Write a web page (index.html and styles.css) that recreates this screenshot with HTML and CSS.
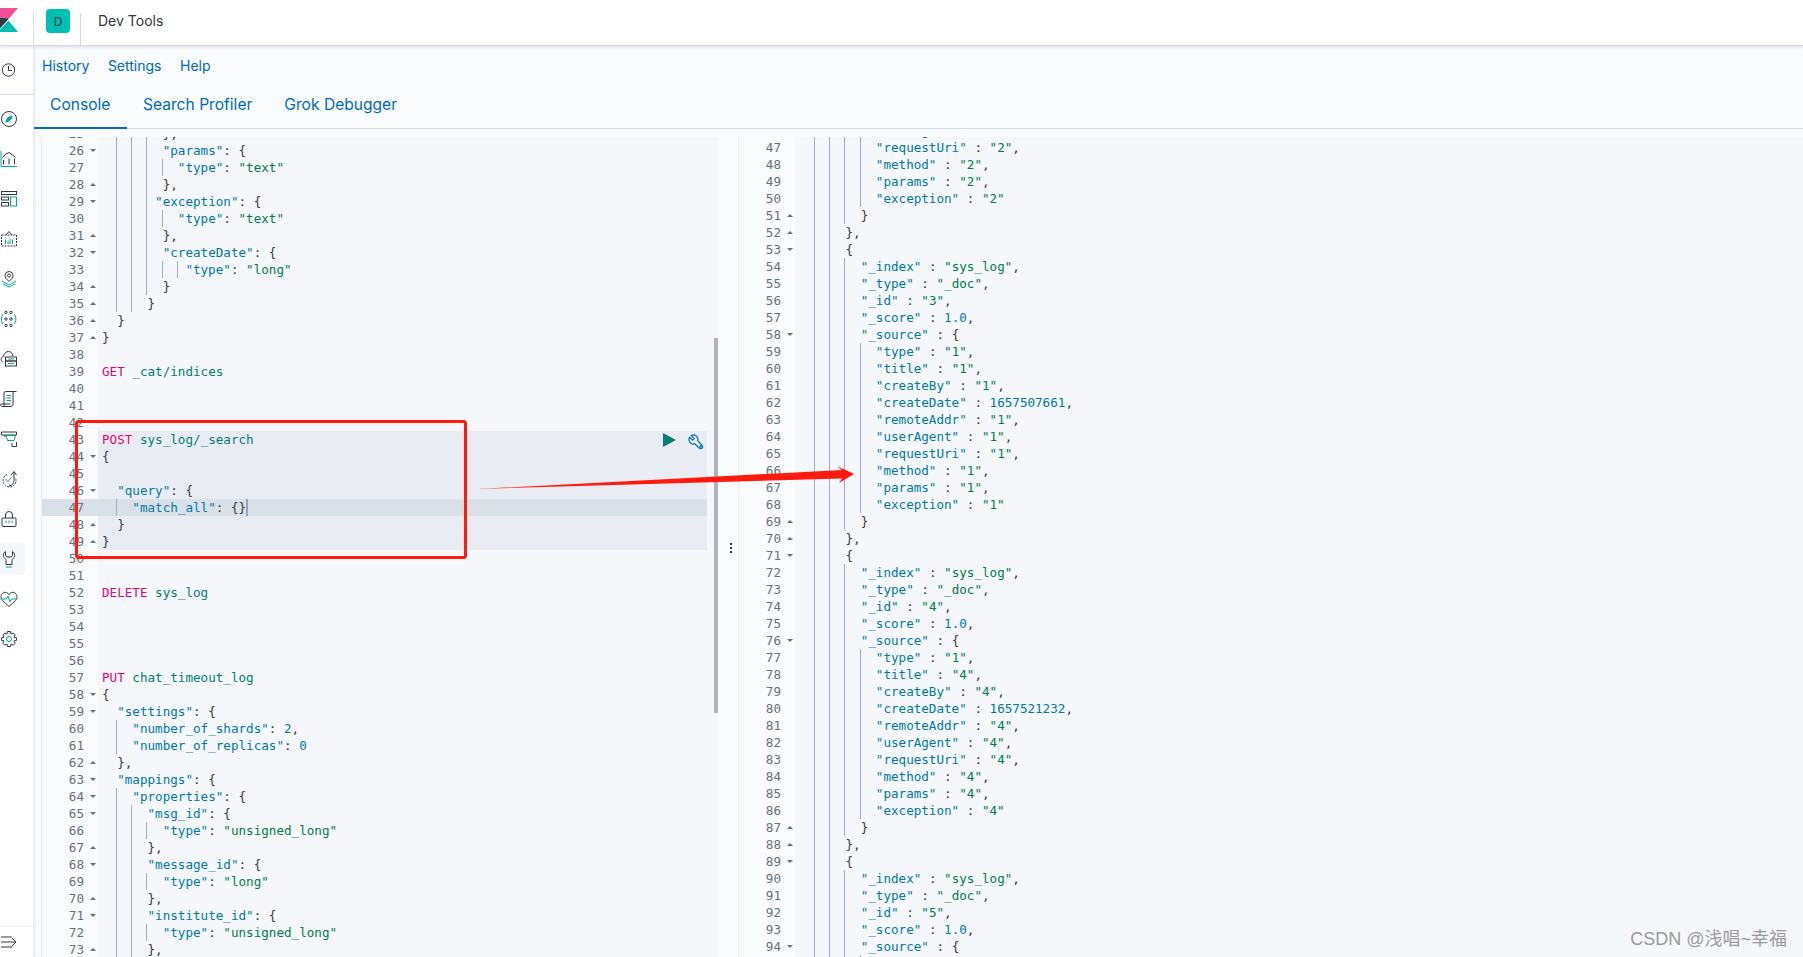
FILE: index.html
```html
<!DOCTYPE html>
<html lang="en">
<head>
<meta charset="utf-8">
<title>Dev Tools</title>
<link rel="stylesheet" href="styles.css">
</head>
<body>
<header class="top">
  <div class="logo-cell">
    <svg class="logo" viewBox="0 0 18 24" width="18" height="24"><path fill="#f04e98" d="M0 0H18L9 10.500 0 9.500Z"/><path fill="#343741" d="M0 9.500 9 10.500 0 20.500Z"/><path fill="#00bfb3" d="M0 24V21.500L8.500 12.500 18 24Z"/></svg>
  </div>
  <div class="space-cell"><span class="badge">D</span></div>
  <div class="crumb">Dev Tools</div>
</header>
<div class="shell">
  <nav class="side">
    <div class="recent">
      <svg class="ico" viewBox="0 0 18 18"><circle cx="8.500" cy="9" r="6.200"/><path d="M8.500 5V9.500H12"/></svg>
    </div>
    <ul class="apps">
      <li><span class="pill"><svg class="ico" viewBox="0 0 18 18"><circle cx="9" cy="9" r="7.500"/><path class="fill" d="M12.500 5.500C8 6 6 8 5.500 12.500 10 12 12 10 12.500 5.500Z"/></svg></span></li>
      <li><span class="pill"><svg class="ico" viewBox="0 0 18 18"><path class="t" d="M1 1V16.500H17"/><path d="M3.500 14.500V10M9 14.500V8.500M14.500 14.500V8.500M2.500 7.500 6 4 9 2.500 12.500 5 15.500 7.500"/></svg></span></li>
      <li><span class="pill"><svg class="ico" viewBox="0 0 18 18"><rect x="1.500" y="1.500" width="15" height="3"/><rect x="1.500" y="7" width="7" height="3"/><rect x="1.500" y="12.500" width="7" height="3.500"/><rect class="t" x="10.500" y="7" width="6" height="9"/></svg></span></li>
      <li><span class="pill"><svg class="ico" viewBox="0 0 18 18"><rect class="dash" x="1.500" y="5" width="15" height="11"/><path d="M6 5 9 1.500 12 5"/><path class="t" d="M5.500 9.500V14M8 11V14M10 8.500V14M12.500 9.500V14" /></svg></span></li>
      <li><span class="pill"><svg class="ico" viewBox="0 0 18 18"><path d="M9 11.500C6.500 9 5 7.500 5 5.500A4 4 0 0 1 13 5.500C13 7.500 11.500 9 9 11.500Z"/><circle cx="9" cy="5.500" r="1.500"/><path class="t" d="M2 11 9 15 16 11M3 14 9 17 15 14"/></svg></span></li>
      <li><span class="pill"><svg class="ico" viewBox="0 0 18 18"><g class="dots"><circle cx="6" cy="2.500" r="1.200"/><circle cx="11" cy="2.500" r="1.200"/><circle cx="6" cy="9" r="1.200"/><circle cx="11" cy="9" r="1.200"/><circle cx="6" cy="15.500" r="1.200"/><circle cx="11" cy="15.500" r="1.200"/></g><path class="t" d="M3 4C1 6 1 12 3 14M14 4C16.500 6 16.500 12 14 14"/></svg></span></li>
      <li><span class="pill"><svg class="ico" viewBox="0 0 18 18"><path d="M3 12C0.500 11 0.500 7 3.500 6.500 4 3 6.500 1.500 8.500 1.500 11 1.500 12.500 3.500 13 6"/><rect x="5.500" y="7" width="11" height="4"/><rect x="5.500" y="11" width="11" height="5"/><path class="t" d="M8 9H14M8 13.500H14"/></svg></span></li>
      <li><span class="pill"><svg class="ico" viewBox="0 0 18 18"><path d="M4 16.500V3A1.500 1.500 0 0 1 5.500 1.500H16.500M13 1.500V13.500A2.500 2.500 0 0 1 11 16.500H2A1.500 1.500 0 0 1 1 14H10.500"/><path class="t" d="M6.500 5.500H11M6.500 8H11M6.500 10.500H11"/></svg></span></li>
      <li><span class="pill"><svg class="ico" viewBox="0 0 18 18"><path d="M1.500 2H16.500V5H1.500ZM5 5V7M12 13V16.500H16.500V12"/><path class="t" d="M6 5.500H15.500L14 10.500H7.500Z"/></svg></span></li>
      <li><span class="pill"><svg class="ico" viewBox="0 0 18 18"><path class="dash" d="M7 4.500A6.500 6.500 0 1 0 15.500 8"/><path d="M11 5 14 1.500 16.500 5M14 2V10.500A6 6 0 0 1 9 16"/><path class="t" d="M5.500 9 8 11.500 11.500 7.500"/></svg></span></li>
      <li><span class="pill"><svg class="ico" viewBox="0 0 18 18"><rect x="2" y="8" width="14" height="8.500" rx="1"/><path d="M5.500 8V5A3.500 3.500 0 0 1 12.500 5V8"/><path class="t" d="M6 10.500V13M9 10.500V13M12 10.500V13"/></svg></span></li>
      <li><span class="pill on"><svg class="ico" viewBox="0 0 18 18"><path d="M5.500 1.500C3 3 2.500 6.500 5 8.500 6 9.500 6 10.500 6 14.500H12C12 10.500 12 9.500 13 8.500 15.500 6.500 15 3 12.500 1.500V5.500L11 7H7L5.500 5.500Z"/><path class="t" d="M6 17H12"/></svg></span></li>
      <li><span class="pill"><svg class="ico" viewBox="0 0 18 18"><path d="M2.500 10.500C0.500 8 0.500 4.500 3 3 5.500 1.500 8 2.500 9 5 10 2.500 12.500 1.500 15 3 17.500 4.500 17.500 8 15.500 10.500L9 16.500Z"/><path class="t" d="M0.500 9H6.500L8 6 10 12 11.500 9H17.500"/></svg></span></li>
      <li><span class="pill"><svg class="ico" viewBox="0 0 18 18"><path d="M7.500 1.500H10.500L11 4 13.200 3 15.200 5 14 7.300 16.500 7.800V10.400L14 10.900 15.200 13.200 13.200 15.200 11 14 10.500 16.500H7.500L7 14 4.800 15.200 2.800 13.200 4 10.900 1.500 10.400V7.800L4 7.300 2.800 5 4.800 3 7 4Z"/><circle class="t" cx="9" cy="9" r="2.500"/></svg></span></li>
    </ul>
    <div class="collapse">
      <svg class="ico" viewBox="0 0 18 18"><path d="M1 4H12M1 9H16M1 14H12M12 5 16 9 12 13"/></svg>
    </div>
  </nav>
  <main class="main">
    <div class="subnav"><a>History</a><a>Settings</a><a>Help</a></div>
    <div class="tabs"><a class="tab sel-tab">Console</a><a class="tab">Search Profiler</a><a class="tab">Grok Debugger</a></div>
    <div class="panes">
      <section class="editor left">
<div class="r"><span class="n">25<i class="fu"></i></span><span class="c"><b></b><b></b><b></b>  },</span></div>
<div class="r"><span class="n">26<i class="fd"></i></span><span class="c"><b></b><b></b><b></b>  <span class="k">"params"</span>: {</span></div>
<div class="r"><span class="n">27<i></i></span><span class="c"><b></b><b></b><b></b><b></b>  <span class="k">"type"</span>: <span class="s">"text"</span></span></div>
<div class="r"><span class="n">28<i class="fu"></i></span><span class="c"><b></b><b></b><b></b>  },</span></div>
<div class="r"><span class="n">29<i class="fd"></i></span><span class="c"><b></b><b></b><b></b> <span class="k">"exception"</span>: {</span></div>
<div class="r"><span class="n">30<i></i></span><span class="c"><b></b><b></b><b></b><b></b>  <span class="k">"type"</span>: <span class="s">"text"</span></span></div>
<div class="r"><span class="n">31<i class="fu"></i></span><span class="c"><b></b><b></b><b></b>  },</span></div>
<div class="r"><span class="n">32<i class="fd"></i></span><span class="c"><b></b><b></b><b></b>  <span class="k">"createDate"</span>: {</span></div>
<div class="r"><span class="n">33<i></i></span><span class="c"><b></b><b></b><b></b><b></b><b></b> <span class="k">"type"</span>: <span class="s">"long"</span></span></div>
<div class="r"><span class="n">34<i class="fu"></i></span><span class="c"><b></b><b></b><b></b>  }</span></div>
<div class="r"><span class="n">35<i class="fu"></i></span><span class="c"><b></b><b></b>  }</span></div>
<div class="r"><span class="n">36<i class="fu"></i></span><span class="c">  }</span></div>
<div class="r"><span class="n">37<i class="fu"></i></span><span class="c">}</span></div>
<div class="r"><span class="n">38<i></i></span><span class="c"></span></div>
<div class="r"><span class="n">39<i></i></span><span class="c"><span class="m">GET</span> <span class="u">_cat/indices</span></span></div>
<div class="r"><span class="n">40<i></i></span><span class="c"></span></div>
<div class="r"><span class="n">41<i></i></span><span class="c"></span></div>
<div class="r"><span class="n">42<i></i></span><span class="c"></span></div>
<div class="r sel"><span class="n">43<i></i></span><span class="c"><span class="m">POST</span> <span class="u">sys_log/_search</span></span></div>
<div class="r sel"><span class="n">44<i class="fd"></i></span><span class="c">{</span></div>
<div class="r sel"><span class="n">45<i></i></span><span class="c"></span></div>
<div class="r sel"><span class="n">46<i class="fd"></i></span><span class="c">  <span class="k">"query"</span>: {</span></div>
<div class="r act"><span class="n">47<i></i></span><span class="c"><b></b>  <span class="k">"match_all"</span>: {}<em class="cur"></em></span></div>
<div class="r sel"><span class="n">48<i class="fu"></i></span><span class="c">  }</span></div>
<div class="r sel"><span class="n">49<i class="fu"></i></span><span class="c">}</span></div>
<div class="r"><span class="n">50<i></i></span><span class="c"></span></div>
<div class="r"><span class="n">51<i></i></span><span class="c"></span></div>
<div class="r"><span class="n">52<i></i></span><span class="c"><span class="m">DELETE</span> <span class="u">sys_log</span></span></div>
<div class="r"><span class="n">53<i></i></span><span class="c"></span></div>
<div class="r"><span class="n">54<i></i></span><span class="c"></span></div>
<div class="r"><span class="n">55<i></i></span><span class="c"></span></div>
<div class="r"><span class="n">56<i></i></span><span class="c"></span></div>
<div class="r"><span class="n">57<i></i></span><span class="c"><span class="m">PUT</span> <span class="u">chat_timeout_log</span></span></div>
<div class="r"><span class="n">58<i class="fd"></i></span><span class="c">{</span></div>
<div class="r"><span class="n">59<i class="fd"></i></span><span class="c">  <span class="k">"settings"</span>: {</span></div>
<div class="r"><span class="n">60<i></i></span><span class="c"><b></b>  <span class="k">"number_of_shards"</span>: <span class="v">2</span>,</span></div>
<div class="r"><span class="n">61<i></i></span><span class="c"><b></b>  <span class="k">"number_of_replicas"</span>: <span class="v">0</span></span></div>
<div class="r"><span class="n">62<i class="fu"></i></span><span class="c">  },</span></div>
<div class="r"><span class="n">63<i class="fd"></i></span><span class="c">  <span class="k">"mappings"</span>: {</span></div>
<div class="r"><span class="n">64<i class="fd"></i></span><span class="c"><b></b>  <span class="k">"properties"</span>: {</span></div>
<div class="r"><span class="n">65<i class="fd"></i></span><span class="c"><b></b><b></b>  <span class="k">"msg_id"</span>: {</span></div>
<div class="r"><span class="n">66<i></i></span><span class="c"><b></b><b></b><b></b>  <span class="k">"type"</span>: <span class="s">"unsigned_long"</span></span></div>
<div class="r"><span class="n">67<i class="fu"></i></span><span class="c"><b></b><b></b>  },</span></div>
<div class="r"><span class="n">68<i class="fd"></i></span><span class="c"><b></b><b></b>  <span class="k">"message_id"</span>: {</span></div>
<div class="r"><span class="n">69<i></i></span><span class="c"><b></b><b></b><b></b>  <span class="k">"type"</span>: <span class="s">"long"</span></span></div>
<div class="r"><span class="n">70<i class="fu"></i></span><span class="c"><b></b><b></b>  },</span></div>
<div class="r"><span class="n">71<i class="fd"></i></span><span class="c"><b></b><b></b>  <span class="k">"institute_id"</span>: {</span></div>
<div class="r"><span class="n">72<i></i></span><span class="c"><b></b><b></b><b></b>  <span class="k">"type"</span>: <span class="s">"unsigned_long"</span></span></div>
<div class="r"><span class="n">73<i class="fu"></i></span><span class="c"><b></b><b></b>  },</span></div>
        <div class="actions">
          <svg class="play" viewBox="0 0 13 14" width="13" height="14"><path d="M0 0 13 7 0 14Z"/></svg>
          <svg class="wrench" viewBox="0 0 16 17" width="16" height="17"><path d="M1.600 3.250 4.500 6.200 6.200 4.500 3.250 1.600A4.500 4.500 0 0 1 9.800 6.800L13.800 11A2 2 0 1 1 11 13.800L6.800 9.800A4.500 4.500 0 0 1 1.600 3.250Z"/><circle cx="12.500" cy="12.500" r="0.600"/></svg>
        </div>
        <div class="thumb"></div>
      </section>
      <div class="resizer"><span></span><span></span><span></span></div>
      <section class="editor right">
<div class="r"><span class="n">46<i></i></span><span class="c"><b></b><b></b><b></b><b></b>  <span class="k">"userAgent"</span> : <span class="s">"2"</span>,</span></div>
<div class="r"><span class="n">47<i></i></span><span class="c"><b></b><b></b><b></b><b></b>  <span class="k">"requestUri"</span> : <span class="s">"2"</span>,</span></div>
<div class="r"><span class="n">48<i></i></span><span class="c"><b></b><b></b><b></b><b></b>  <span class="k">"method"</span> : <span class="s">"2"</span>,</span></div>
<div class="r"><span class="n">49<i></i></span><span class="c"><b></b><b></b><b></b><b></b>  <span class="k">"params"</span> : <span class="s">"2"</span>,</span></div>
<div class="r"><span class="n">50<i></i></span><span class="c"><b></b><b></b><b></b><b></b>  <span class="k">"exception"</span> : <span class="s">"2"</span></span></div>
<div class="r"><span class="n">51<i class="fu"></i></span><span class="c"><b></b><b></b><b></b>  }</span></div>
<div class="r"><span class="n">52<i class="fu"></i></span><span class="c"><b></b><b></b>  },</span></div>
<div class="r"><span class="n">53<i class="fd"></i></span><span class="c"><b></b><b></b>  {</span></div>
<div class="r"><span class="n">54<i></i></span><span class="c"><b></b><b></b><b></b>  <span class="k">"_index"</span> : <span class="s">"sys_log"</span>,</span></div>
<div class="r"><span class="n">55<i></i></span><span class="c"><b></b><b></b><b></b>  <span class="k">"_type"</span> : <span class="s">"_doc"</span>,</span></div>
<div class="r"><span class="n">56<i></i></span><span class="c"><b></b><b></b><b></b>  <span class="k">"_id"</span> : <span class="s">"3"</span>,</span></div>
<div class="r"><span class="n">57<i></i></span><span class="c"><b></b><b></b><b></b>  <span class="k">"_score"</span> : <span class="v">1.0</span>,</span></div>
<div class="r"><span class="n">58<i class="fd"></i></span><span class="c"><b></b><b></b><b></b>  <span class="k">"_source"</span> : {</span></div>
<div class="r"><span class="n">59<i></i></span><span class="c"><b></b><b></b><b></b><b></b>  <span class="k">"type"</span> : <span class="s">"1"</span>,</span></div>
<div class="r"><span class="n">60<i></i></span><span class="c"><b></b><b></b><b></b><b></b>  <span class="k">"title"</span> : <span class="s">"1"</span>,</span></div>
<div class="r"><span class="n">61<i></i></span><span class="c"><b></b><b></b><b></b><b></b>  <span class="k">"createBy"</span> : <span class="s">"1"</span>,</span></div>
<div class="r"><span class="n">62<i></i></span><span class="c"><b></b><b></b><b></b><b></b>  <span class="k">"createDate"</span> : <span class="v">1657507661</span>,</span></div>
<div class="r"><span class="n">63<i></i></span><span class="c"><b></b><b></b><b></b><b></b>  <span class="k">"remoteAddr"</span> : <span class="s">"1"</span>,</span></div>
<div class="r"><span class="n">64<i></i></span><span class="c"><b></b><b></b><b></b><b></b>  <span class="k">"userAgent"</span> : <span class="s">"1"</span>,</span></div>
<div class="r"><span class="n">65<i></i></span><span class="c"><b></b><b></b><b></b><b></b>  <span class="k">"requestUri"</span> : <span class="s">"1"</span>,</span></div>
<div class="r"><span class="n">66<i></i></span><span class="c"><b></b><b></b><b></b><b></b>  <span class="k">"method"</span> : <span class="s">"1"</span>,</span></div>
<div class="r"><span class="n">67<i></i></span><span class="c"><b></b><b></b><b></b><b></b>  <span class="k">"params"</span> : <span class="s">"1"</span>,</span></div>
<div class="r"><span class="n">68<i></i></span><span class="c"><b></b><b></b><b></b><b></b>  <span class="k">"exception"</span> : <span class="s">"1"</span></span></div>
<div class="r"><span class="n">69<i class="fu"></i></span><span class="c"><b></b><b></b><b></b>  }</span></div>
<div class="r"><span class="n">70<i class="fu"></i></span><span class="c"><b></b><b></b>  },</span></div>
<div class="r"><span class="n">71<i class="fd"></i></span><span class="c"><b></b><b></b>  {</span></div>
<div class="r"><span class="n">72<i></i></span><span class="c"><b></b><b></b><b></b>  <span class="k">"_index"</span> : <span class="s">"sys_log"</span>,</span></div>
<div class="r"><span class="n">73<i></i></span><span class="c"><b></b><b></b><b></b>  <span class="k">"_type"</span> : <span class="s">"_doc"</span>,</span></div>
<div class="r"><span class="n">74<i></i></span><span class="c"><b></b><b></b><b></b>  <span class="k">"_id"</span> : <span class="s">"4"</span>,</span></div>
<div class="r"><span class="n">75<i></i></span><span class="c"><b></b><b></b><b></b>  <span class="k">"_score"</span> : <span class="v">1.0</span>,</span></div>
<div class="r"><span class="n">76<i class="fd"></i></span><span class="c"><b></b><b></b><b></b>  <span class="k">"_source"</span> : {</span></div>
<div class="r"><span class="n">77<i></i></span><span class="c"><b></b><b></b><b></b><b></b>  <span class="k">"type"</span> : <span class="s">"1"</span>,</span></div>
<div class="r"><span class="n">78<i></i></span><span class="c"><b></b><b></b><b></b><b></b>  <span class="k">"title"</span> : <span class="s">"4"</span>,</span></div>
<div class="r"><span class="n">79<i></i></span><span class="c"><b></b><b></b><b></b><b></b>  <span class="k">"createBy"</span> : <span class="s">"4"</span>,</span></div>
<div class="r"><span class="n">80<i></i></span><span class="c"><b></b><b></b><b></b><b></b>  <span class="k">"createDate"</span> : <span class="v">1657521232</span>,</span></div>
<div class="r"><span class="n">81<i></i></span><span class="c"><b></b><b></b><b></b><b></b>  <span class="k">"remoteAddr"</span> : <span class="s">"4"</span>,</span></div>
<div class="r"><span class="n">82<i></i></span><span class="c"><b></b><b></b><b></b><b></b>  <span class="k">"userAgent"</span> : <span class="s">"4"</span>,</span></div>
<div class="r"><span class="n">83<i></i></span><span class="c"><b></b><b></b><b></b><b></b>  <span class="k">"requestUri"</span> : <span class="s">"4"</span>,</span></div>
<div class="r"><span class="n">84<i></i></span><span class="c"><b></b><b></b><b></b><b></b>  <span class="k">"method"</span> : <span class="s">"4"</span>,</span></div>
<div class="r"><span class="n">85<i></i></span><span class="c"><b></b><b></b><b></b><b></b>  <span class="k">"params"</span> : <span class="s">"4"</span>,</span></div>
<div class="r"><span class="n">86<i></i></span><span class="c"><b></b><b></b><b></b><b></b>  <span class="k">"exception"</span> : <span class="s">"4"</span></span></div>
<div class="r"><span class="n">87<i class="fu"></i></span><span class="c"><b></b><b></b><b></b>  }</span></div>
<div class="r"><span class="n">88<i class="fu"></i></span><span class="c"><b></b><b></b>  },</span></div>
<div class="r"><span class="n">89<i class="fd"></i></span><span class="c"><b></b><b></b>  {</span></div>
<div class="r"><span class="n">90<i></i></span><span class="c"><b></b><b></b><b></b>  <span class="k">"_index"</span> : <span class="s">"sys_log"</span>,</span></div>
<div class="r"><span class="n">91<i></i></span><span class="c"><b></b><b></b><b></b>  <span class="k">"_type"</span> : <span class="s">"_doc"</span>,</span></div>
<div class="r"><span class="n">92<i></i></span><span class="c"><b></b><b></b><b></b>  <span class="k">"_id"</span> : <span class="s">"5"</span>,</span></div>
<div class="r"><span class="n">93<i></i></span><span class="c"><b></b><b></b><b></b>  <span class="k">"_score"</span> : <span class="v">1.0</span>,</span></div>
<div class="r"><span class="n">94<i class="fd"></i></span><span class="c"><b></b><b></b><b></b>  <span class="k">"_source"</span> : {</span></div>
<div class="r"><span class="n">95<i></i></span><span class="c"><b></b><b></b><b></b><b></b>  <span class="k">"type"</span> : <span class="s">"1"</span>,</span></div>
      </section>
    </div>
  </main>
</div>
<svg class="marks" viewBox="0 0 1803 957" width="1803" height="957">
  <rect class="box" x="76.500" y="421.500" width="389" height="136" rx="2"/>
  <path class="arrow" d="M477 489 842 470 837 466 854 474 839 483 842 478.500Z"/>
</svg>
<div class="watermark">CSDN @浅唱~幸福</div>
</body>
</html>
```
FILE: styles.css
```css
* { box-sizing: border-box; }
html, body { margin: 0; height: 100%; overflow: hidden; }
body { font-family: Inter, "Noto Sans", sans-serif; color: #343741; background: #fafbfd; display: flex; flex-direction: column; position: relative; }

.top { height: 46px; flex: none; display: flex; background: #fff; border-bottom: 1px solid #d3dae6; box-shadow: 0 1px 3px rgba(152,162,179,.35); position: relative; z-index: 2; }
.logo-cell { width: 33px; padding-top: 8px; }
.logo { display: block; }
.space-cell { width: 48px; margin-top: 13px; border-left: 1px solid #d3dae6; border-right: 1px solid #d3dae6; padding: 0 0 0 12px; }
.badge { display: flex; align-items: center; justify-content: center; width: 24px; height: 24px; margin-top: -4px; border-radius: 4px; background: #00bfb3; color: #1a3a3a; font-size: 12px; }
.crumb { margin-left: 17px; padding-top: 12px; font-size: 14px; line-height: 18px; color: #343741; }

.shell { flex: 1; display: flex; min-height: 0; }
.side { width: 34px; flex: none; background: #fff; display: flex; flex-direction: column; border-right: 1px solid #e6e9f0; box-shadow: 1px 0 2px rgba(152,162,179,.18); position: relative; z-index: 1; }
.recent { height: 49px; display: flex; align-items: center; border-bottom: 1px solid #d3dae6; }
.apps { list-style: none; margin: 0; padding: 4px 0 0; flex: 1; }
.apps li { height: 40px; display: flex; align-items: center; }
.pill { width: 25px; height: 32px; display: flex; align-items: center; border-radius: 0 4px 4px 0; }
.pill.on { background: #f5f7fa; }
.collapse { height: 31px; display: flex; align-items: center; border-top: 1px solid #eef0f5; }
.ico { width: 18px; height: 18px; display: block; fill: none; stroke: #343741; stroke-width: 1; }
.ico .t { stroke: #00a69b; }
.ico .fill { fill: #00a69b; stroke: none; }
.ico .dash { stroke-dasharray: 2 1; }
.ico .dots { fill: none; }

.main { flex: 1; min-width: 0; display: flex; flex-direction: column; }
.subnav { height: 38px; flex: none; display: flex; align-items: center; gap: 18.500px; padding-left: 8px; margin-bottom: 1px; font-size: 14px; color: #006bb4; }
.tabs { height: 44px; flex: none; display: flex; border-bottom: 1px solid #d3dae6; margin-bottom: 8px; }
.tab { height: 44px; padding: 0 16px; font-size: 15.600px; line-height: 39px; color: #006bb4; }
.sel-tab { border-bottom: 2px solid #006bb4; min-width: 93px; }

.panes { flex: 1; min-height: 0; display: flex; padding-left: 7px; }
.editor { position: relative; overflow: hidden; background: #f5f7fa; border-left: 1px solid #e9ecf2; font-family: "DejaVu Sans Mono", "Liberation Mono", monospace; font-size: 12.600px; line-height: 17px; color: #343741; }
.left { width: 677px; flex: none; padding-right: 11px; }
.right { flex: 1; min-width: 0; }
.left .r:first-child { margin-top: -12px; }
.right .r:first-child { margin-top: -15px; }
.r { height: 17px; display: flex; }
.n { width: 56px; flex: none; display: flex; justify-content: flex-end; background: #fafbfd; color: #69707d; }
.n i { width: 14px; flex: none; display: flex; align-items: center; justify-content: center; padding-left: 4px; }
.fu::before { content: ""; border: 3px solid transparent; border-top: 0; border-bottom: 3px solid #69707d; }
.fd::before { content: ""; border: 3px solid transparent; border-bottom: 0; border-top: 3px solid #69707d; }
.c { flex: 1; min-width: 0; padding-left: 4px; white-space: pre; }
.right .c { padding-left: 5px; }
.c b { display: inline-block; width: 2ch; height: 17px; vertical-align: top; border-right: 1px solid #a2aabb; }
.sel .c { background: #e9edf3; }
.act .c, .act .n { background: #dae0e8; }
.cur { display: inline-block; width: 2px; height: 17px; vertical-align: top; background: #98a2b3; }
.k { color: #0079a5; }
.s { color: #017d4b; }
.v { color: #0079a5; }
.m { color: #dd0a73; }
.u { color: #017d73; }

.actions { position: absolute; left: 621px; top: 296px; display: flex; align-items: flex-start; gap: 12px; }
.play { display: block; fill: #017d73; }
.wrench { display: block; margin-top: 1px; fill: none; stroke: #006bb4; stroke-width: 1.200; }
.thumb { position: absolute; right: 0; top: 201px; width: 4px; height: 375px; background: #b0b3bd; }

.resizer { width: 20px; flex: none; display: flex; flex-direction: column; align-items: center; gap: 2px; padding-top: 406px; padding-left: 6px; }
.resizer span { width: 2px; height: 2px; background: #343741; }

.marks { position: absolute; left: 0; top: 0; pointer-events: none; z-index: 3; }
.box { fill: none; stroke: #ff1a10; stroke-width: 3; }
.arrow { fill: #ff1a10; }
.watermark { position: absolute; right: 16px; bottom: 7px; z-index: 3; font-family: "Liberation Sans", "Noto Sans CJK SC", sans-serif; font-size: 18px; line-height: 22px; color: #9a9a9a; }
```
